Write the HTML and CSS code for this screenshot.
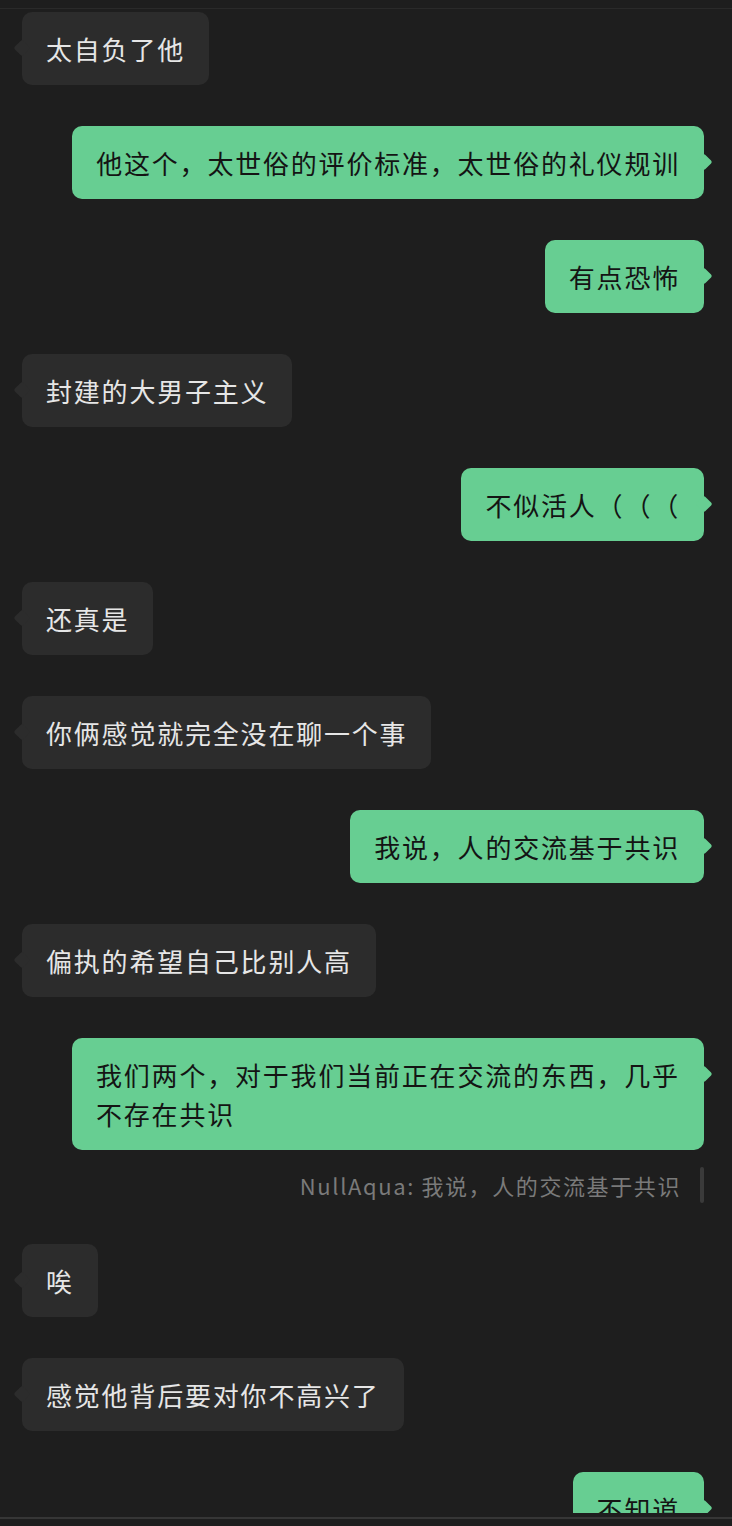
FILE: index.html
```html
<!DOCTYPE html>
<html lang="zh-CN">
<head>
    <meta charset="UTF-8">
    <meta name="viewport" content="width=device-width, initial-scale=1.0">
    <title>聊天记录</title>
    <link rel="stylesheet" href="styles.css">
</head>
<body>

<div class="top-rule"></div>

<!-- 聊天窗口 -->
<div class="chat">
    <div class="messages">
        <div class="msg in"><div class="bubble">太自负了他</div></div>
        <div class="msg out"><div class="bubble">他这个，太世俗的评价标准，太世俗的礼仪规训</div></div>
        <div class="msg out"><div class="bubble">有点恐怖</div></div>
        <div class="msg in"><div class="bubble">封建的大男子主义</div></div>
        <div class="msg out"><div class="bubble">不似活人（（（</div></div>
        <div class="msg in"><div class="bubble">还真是</div></div>
        <div class="msg in"><div class="bubble">你俩感觉就完全没在聊一个事</div></div>
        <div class="msg out"><div class="bubble">我说，人的交流基于共识</div></div>
        <div class="msg in"><div class="bubble">偏执的希望自己比别人高</div></div>

        <!-- 引用回复 -->
        <div class="msg out">
            <div class="bubble">我们两个，对于我们当前正在交流的东西，几乎不存在共识</div>
            <div class="quote">
                <span class="quote-text">NullAqua: 我说，人的交流基于共识</span>
                <span class="quote-bar"></span>
            </div>
        </div>

        <div class="msg in"><div class="bubble">唉</div></div>
        <div class="msg in"><div class="bubble">感觉他背后要对你不高兴了</div></div>
        <div class="msg out"><div class="bubble">不知道</div></div>
    </div>
</div>

<div class="bottom-rule"></div>

</body>
</html>
```

FILE: styles.css
```css
* {
    box-sizing: border-box;
}

body {
    margin: 0;
    padding: 0;
    background-color: #1e1e1e;
    font-family: "Noto Sans CJK SC", "Noto Sans", sans-serif;
}

.top-rule {
    height: 9px;
    border-bottom: 1px solid #2a2a2a;
}

/* 채팅 영역 */
.chat {
    height: 1504px;
    padding-top: 3px;
    overflow: hidden;
}

.bottom-rule {
    margin-top: 4px;
    height: 2px;
    background-color: #363636;
}

.messages {
    display: flex;
    flex-direction: column;
    gap: 41px;
}

.msg {
    display: flex;
    flex-direction: column;
}

.msg.in {
    align-items: flex-start;
    padding-left: 22px;
}

.msg.out {
    align-items: flex-end;
    padding-right: 28px;
}

/* 말풍선 */
.bubble {
    position: relative;
    max-width: 632px;
    padding: 17px 24px;
    border-radius: 10px;
    font-size: 26px;
    line-height: 39px;
    letter-spacing: 1.8px;
    text-spacing-trim: space-all;
}

.bubble::before {
    content: "";
    position: absolute;
    top: 30px;
    width: 12px;
    height: 12px;
    border-radius: 2px;
    background-color: inherit;
    transform: rotate(45deg);
}

.msg.in .bubble {
    background-color: #2c2c2c;
    color: #e6e6e6;
}

.msg.in .bubble::before {
    left: -6px;
}

.msg.out .bubble {
    background-color: #67ce92;
    color: #141414;
}

.msg.out .bubble::before {
    right: -6px;
}

/* 인용 */
.quote {
    display: flex;
    align-items: center;
    gap: 19px;
    margin-top: 17px;
}

.quote-text {
    font-size: 22px;
    letter-spacing: 1.6px;
    color: #7a7a7a;
}

.quote-bar {
    width: 4px;
    height: 36px;
    border-radius: 2px;
    background-color: #3a3a3a;
}
```
